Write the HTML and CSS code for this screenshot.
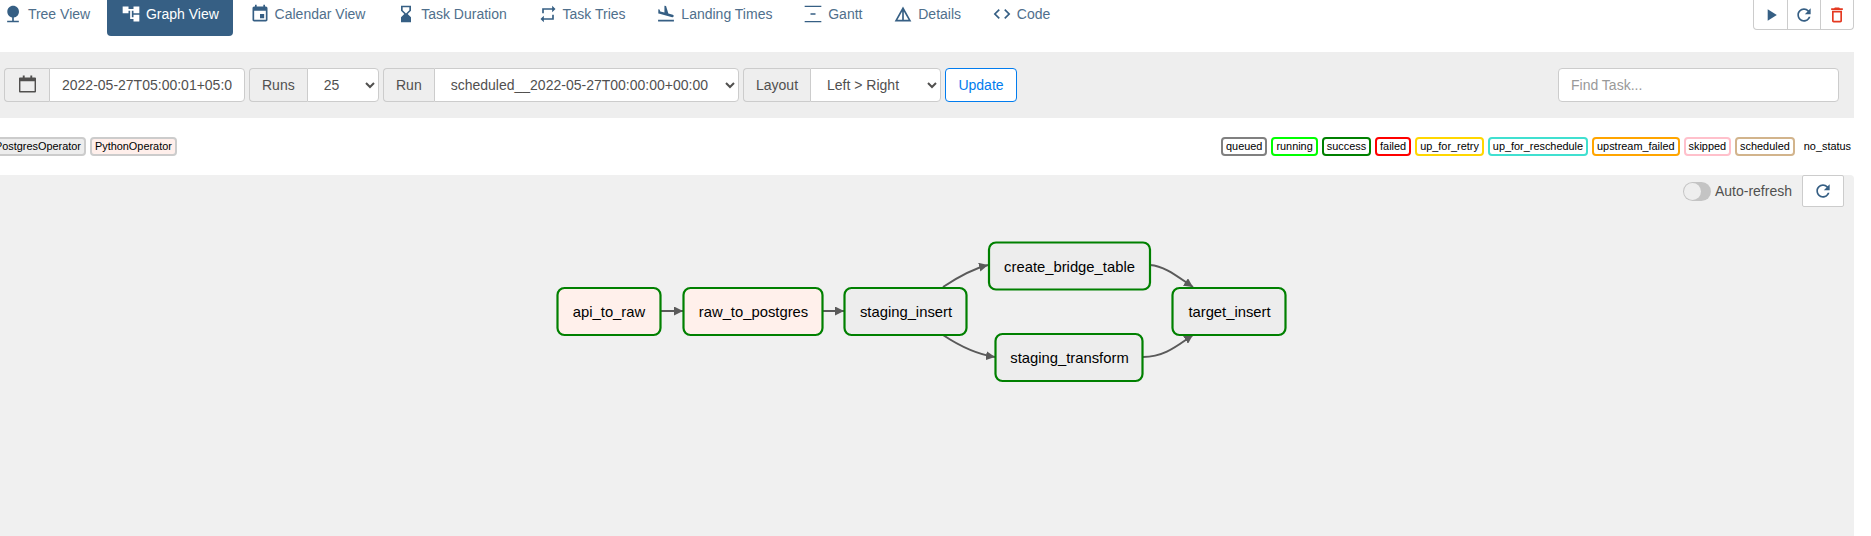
FILE: index.html
```html
<!DOCTYPE html>
<html lang="en">
<head>
    <meta charset="UTF-8">
    <title>Graph View</title>
    <link rel="stylesheet" href="styles.css">
</head>
<body>
    <div class="page">
        <div class="top-row">
            <ul class="tabs">
                <li><a href="#"><svg class="icon" viewBox="0 0 24 24"><path d="M13 16.12c3.47-.41 6.17-3.36 6.17-6.95 0-3.87-3.13-7-7-7s-7 3.13-7 7c0 3.47 2.52 6.34 5.83 6.89V20H5v2h14v-2h-6v-3.88z"/></svg>Tree View</a></li>
                <li class="active"><a href="#"><svg class="icon" viewBox="0 0 24 24"><path d="M22 11V3h-7v3H9V3H2v8h7V8h2v10h4v3h7v-8h-7v3h-2V8h2v3z"/></svg>Graph View</a></li>
                <li><a href="#"><svg class="icon" viewBox="0 0 24 24"><path d="M17 12h-5v5h5v-5zM16 1v2H8V1H6v2H5c-1.11 0-1.99.9-1.99 2L3 19c0 1.1.89 2 2 2h14c1.1 0 2-.9 2-2V5c0-1.1-.9-2-2-2h-1V1h-2zm3 18H5V8h14v11z"/></svg>Calendar View</a></li>
                <li><a href="#"><svg class="icon" viewBox="0 0 24 24"><path d="M18 22l-.01-6L14 12l3.99-4.01L18 2H6v6l4 4-4 3.99V22h12zM8 7.5V4h8v3.5l-4 4-4-4z"/></svg>Task Duration</a></li>
                <li><a href="#"><svg class="icon" viewBox="0 0 24 24"><path d="M7 7h10v3l4-4-4-4v3H5v6h2V7zm10 10H7v-3l-4 4 4 4v-3h12v-6h-2v4z"/></svg>Task Tries</a></li>
                <li><a href="#"><svg class="icon" viewBox="0 0 24 24"><path d="M2.5 19h19v2h-19zm7.18-5.73l4.35 1.16 5.31 1.42c.8.21 1.62-.26 1.84-1.06.21-.8-.26-1.62-1.06-1.84l-5.31-1.42-2.76-9.02L10.12 2v8.28L5.15 8.95l-.93-2.32-1.45-.39v5.17l1.6.43 5.31 1.43z"/></svg>Landing Times</a></li>
                <li><a href="#"><svg class="icon" viewBox="0 0 24 24"><path d="M2 22v-1.500h20V22H2zM2 3.500V2h20v1.500H2zM9 13v-2h6v2H9z"/></svg>Gantt</a></li>
                <li><a href="#"><svg class="icon" viewBox="0 0 24 24"><path d="M12 3L2 21h20L12 3zm1 5.920L18.600 19H13V8.920zm-2 0V19H5.400L11 8.920z"/></svg>Details</a></li>
                <li><a href="#"><svg class="icon" viewBox="0 0 24 24"><path d="M9.400 16.600L4.800 12l4.600-4.600L8 6l-6 6 6 6 1.400-1.400zm5.200 0l4.600-4.600-4.600-4.600L16 6l6 6-6 6-1.400-1.400z"/></svg>Code</a></li>
            </ul>
            <div class="dag-actions">
                <button><svg class="icon" viewBox="0 0 24 24"><path d="M8 5v14l11-7z"/></svg></button>
                <button><svg class="icon" viewBox="0 0 24 24"><path d="M17.650 6.350C16.200 4.900 14.210 4 12 4c-4.420 0-7.990 3.580-7.990 8s3.570 8 7.990 8c3.730 0 6.840-2.550 7.730-6h-2.080c-.82 2.330-3.040 4-5.650 4-3.310 0-6-2.690-6-6s2.690-6 6-6c1.660 0 3.140.69 4.220 1.780L13 11h7V4l-2.350 2.350z"/></svg></button>
                <button class="danger"><svg class="icon" viewBox="0 0 24 24"><path d="M6 19c0 1.100.9 2 2 2h8c1.100 0 2-.9 2-2V7H6v12zM8 9h8v10H8V9zm7.500-5l-1-1h-5l-1 1H5v2h14V4z"/></svg></button>
            </div>
        </div>

        <form class="filter-bar">
            <div class="input-group date-group">
                <span class="addon addon-icon"><svg class="cal-icon" viewBox="0 0 18 18"><path d="M4 0h2v2h6V0h2v2h3a1 1 0 0 1 1 1v14a1 1 0 0 1-1 1H1a1 1 0 0 1-1-1V3a1 1 0 0 1 1-1h3V0zM1.500 6v10.500h15V6h-15z"/></svg></span>
                <input type="text" value="2022-05-27T05:00:01+05:00">
            </div>
            <div class="input-group runs-group">
                <span class="addon">Runs</span>
                <select><option>25</option></select>
            </div>
            <div class="input-group run-group">
                <span class="addon">Run</span>
                <select><option>scheduled__2022-05-27T00:00:00+00:00</option></select>
            </div>
            <div class="input-group layout-group">
                <span class="addon">Layout</span>
                <select><option>Left &gt; Right</option></select>
            </div>
            <button type="button" class="update-btn">Update</button>
            <input class="find-task" type="text" placeholder="Find Task...">
        </form>

        <div class="legend-row">
            <div class="legend">
                <span class="pill op-postgres">PostgresOperator</span>
                <span class="pill op-python">PythonOperator</span>
            </div>
            <div class="legend">
                <span class="pill st-queued">queued</span>
                <span class="pill st-running">running</span>
                <span class="pill st-success">success</span>
                <span class="pill st-failed">failed</span>
                <span class="pill st-retry">up_for_retry</span>
                <span class="pill st-reschedule">up_for_reschedule</span>
                <span class="pill st-upstream">upstream_failed</span>
                <span class="pill st-skipped">skipped</span>
                <span class="pill st-scheduled">scheduled</span>
                <span class="pill st-none">no_status</span>
            </div>
        </div>

        <div class="graph-panel">
            <div class="refresh-row">
                <span class="toggle"><span class="knob"></span></span>
                <span class="refresh-label">Auto-refresh</span>
                <button class="refresh-btn"><svg class="icon" viewBox="0 0 24 24"><path d="M17.650 6.350C16.200 4.900 14.210 4 12 4c-4.420 0-7.990 3.580-7.990 8s3.570 8 7.990 8c3.730 0 6.840-2.550 7.730-6h-2.080c-.82 2.330-3.040 4-5.650 4-3.310 0-6-2.690-6-6s2.690-6 6-6c1.660 0 3.140.69 4.220 1.780L13 11h7V4l-2.350 2.350z"/></svg></button>
            </div>
            <svg class="graph" width="1854" height="329" viewBox="0 0 1854 329">
                <defs>
                    <marker id="arrow" markerUnits="userSpaceOnUse" viewBox="0 0 10 10" refX="10" refY="5" markerWidth="9" markerHeight="9" orient="auto">
                        <path d="M0 0L10 5L0 10z" fill="#5a5a5a"/>
                    </marker>
                </defs>
                <g class="edges">
                    <path d="M661 104L683 104"/>
                    <path d="M823 104L844 104"/>
                    <path d="M943 80C958 70 972 62 988 58"/>
                    <path d="M943 128C958 138 975 147 995 150"/>
                    <path d="M1150 58C1165 59 1178 70 1193 80"/>
                    <path d="M1143 150C1165 150 1178 138 1193 128"/>
                </g>
                <g class="nodes">
                    <rect class="python" x="557.500" y="81" width="103" height="47" rx="7"/>
                    <text x="609" y="110">api_to_raw</text>
                    <rect class="python" x="683.500" y="81" width="139" height="47" rx="7"/>
                    <text x="753.500" y="110">raw_to_postgres</text>
                    <rect class="postgres" x="844.500" y="81" width="122" height="47" rx="7"/>
                    <text x="906" y="110">staging_insert</text>
                    <rect class="postgres" x="989" y="35.500" width="161" height="47" rx="7"/>
                    <text x="1069.500" y="65">create_bridge_table</text>
                    <rect class="postgres" x="995.500" y="127" width="147" height="47" rx="7"/>
                    <text x="1069.500" y="156">staging_transform</text>
                    <rect class="postgres" x="1172.500" y="81" width="113" height="47" rx="7"/>
                    <text x="1229.500" y="110">target_insert</text>
                </g>
            </svg>
        </div>
    </div>
</body>
</html>
```

FILE: styles.css
```css
html, body {
    margin: 0;
    height: 536px;
    overflow: hidden;
    background-color: #ffffff;
}
body {
    font-family: "Liberation Sans", Arial, sans-serif;
    font-size: 14px;
    line-height: 20px;
    color: #51504f;
}
.page {
    width: 1854px;
}
.icon {
    width: 20px;
    height: 20px;
    fill: currentColor;
    flex: none;
}

/* top tabs */
.top-row {
    display: flex;
    justify-content: space-between;
    height: 52px;
}
.tabs {
    display: flex;
    gap: 2px;
    list-style: none;
    margin: 0 0 0 -11.500px;
    padding: 0;
    height: 36px;
}
.tabs a {
    display: flex;
    gap: 5px;
    align-items: flex-start;
    padding: 4px 14.400px 12px;
    color: #4f6f8c;
    text-decoration: none;
    border-radius: 0 0 4px 4px;
}
.tabs .icon {
    color: #365f84;
}
.tabs .active a {
    background-color: #365f84;
    color: #ffffff;
}
.tabs .active .icon {
    color: #ffffff;
}
.dag-actions {
    display: flex;
    height: 30px;
    border: 1px solid #cccccc;
    border-top: none;
    border-radius: 0 0 4px 4px;
    box-sizing: border-box;
}
.dag-actions button {
    width: 33px;
    padding: 0;
    background: none;
    border: none;
    border-left: 1px solid #cccccc;
    color: #365f84;
    display: flex;
    align-items: center;
    justify-content: center;
}
.dag-actions button:first-child {
    border-left: none;
}
.dag-actions .danger {
    color: #e43921;
}

/* filter bar */
.filter-bar {
    display: flex;
    gap: 4px;
    height: 66px;
    box-sizing: border-box;
    padding: 16px 15px 16px 4px;
    background-color: #eeeeee;
}
.input-group {
    display: flex;
    height: 34px;
}
.addon {
    display: flex;
    align-items: center;
    box-sizing: border-box;
    padding: 0 12px;
    background-color: #eeeeee;
    border: 1px solid #cccccc;
    border-right: none;
    border-radius: 4px 0 0 4px;
}
.addon-icon {
    width: 45px;
    justify-content: center;
    padding: 0;
}
.cal-icon {
    width: 17px;
    height: 18px;
    margin-top: -2px;
    fill: #51504f;
}
.input-group input, .input-group select {
    flex: 1;
    min-width: 0;
    box-sizing: border-box;
    height: 34px;
    padding: 6px 12px;
    background-color: #ffffff;
    border: 1px solid #cccccc;
    border-radius: 0 4px 4px 0;
    font-family: inherit;
    font-size: 14px;
    color: #51504f;
}
.date-group {
    width: 241px;
}
.runs-group {
    width: 130px;
}
.run-group {
    width: 356px;
}
.layout-group {
    width: 198px;
}
.update-btn {
    width: 72px;
    height: 34px;
    padding: 0;
    background-color: #ffffff;
    border: 1px solid #017cee;
    border-radius: 4px;
    font-family: inherit;
    font-size: 14px;
    color: #017cee;
}
.find-task {
    width: 281px;
    height: 34px;
    box-sizing: border-box;
    margin-left: auto;
    padding: 6px 12px;
    background-color: #ffffff;
    border: 1px solid #cccccc;
    border-radius: 4px;
    font-family: inherit;
    font-size: 14px;
}
.find-task::placeholder {
    color: #999999;
}

/* legend */
.legend-row {
    display: flex;
    justify-content: space-between;
    align-items: center;
    height: 57px;
}
.legend {
    display: flex;
    gap: 4px;
    margin-right: -2px;
}
.legend:first-child {
    margin-left: -10px;
}
.pill {
    box-sizing: border-box;
    height: 19px;
    padding: 0 3px;
    border: 2px solid #cccccc;
    border-radius: 4px;
    font-size: 10.900px;
    line-height: 15px;
    color: #000000;
    background-color: #ffffff;
}
.op-postgres { background-color: #ededed; }
.op-python { background-color: #ffefeb; }
.st-queued { border-color: #808080; }
.st-running { border-color: #00ff00; }
.st-success { border-color: #008000; }
.st-failed { border-color: #ff0000; }
.st-retry { border-color: #ffd700; }
.st-reschedule { border-color: #40e0d0; }
.st-upstream { border-color: #ffa500; }
.st-skipped { border-color: #ffc0cb; }
.st-scheduled { border-color: #d2b48c; }
.st-none { border-color: transparent; }

/* graph panel */
.graph-panel {
    height: 361px;
    background-color: #f0f0f0;
    border-radius: 0 4px 0 0;
}
.refresh-row {
    display: flex;
    justify-content: flex-end;
    align-items: center;
    height: 32px;
    padding-right: 10px;
}
.toggle {
    width: 28px;
    height: 19px;
    margin-right: 4px;
    border-radius: 10px;
    background-color: #c4c4c4;
    position: relative;
}
.knob {
    position: absolute;
    left: 1px;
    top: 1px;
    width: 17px;
    height: 17px;
    border-radius: 50%;
    background-color: #eeeeee;
}
.refresh-btn {
    width: 42px;
    height: 32px;
    margin-left: 10px;
    padding: 0;
    background-color: #ffffff;
    border: 1px solid #cccccc;
    border-radius: 2px;
    color: #365f84;
    display: flex;
    align-items: center;
    justify-content: center;
}
.graph {
    display: block;
}
.edges path {
    fill: none;
    stroke: #5a5a5a;
    stroke-width: 2;
    marker-end: url(#arrow);
}
.nodes rect {
    stroke: #008000;
    stroke-width: 2.200;
}
.nodes .python { fill: #fff0eb; }
.nodes .postgres { fill: #ededed; }
.nodes text {
    font-size: 14.800px;
    text-anchor: middle;
    fill: #000000;
}
```
